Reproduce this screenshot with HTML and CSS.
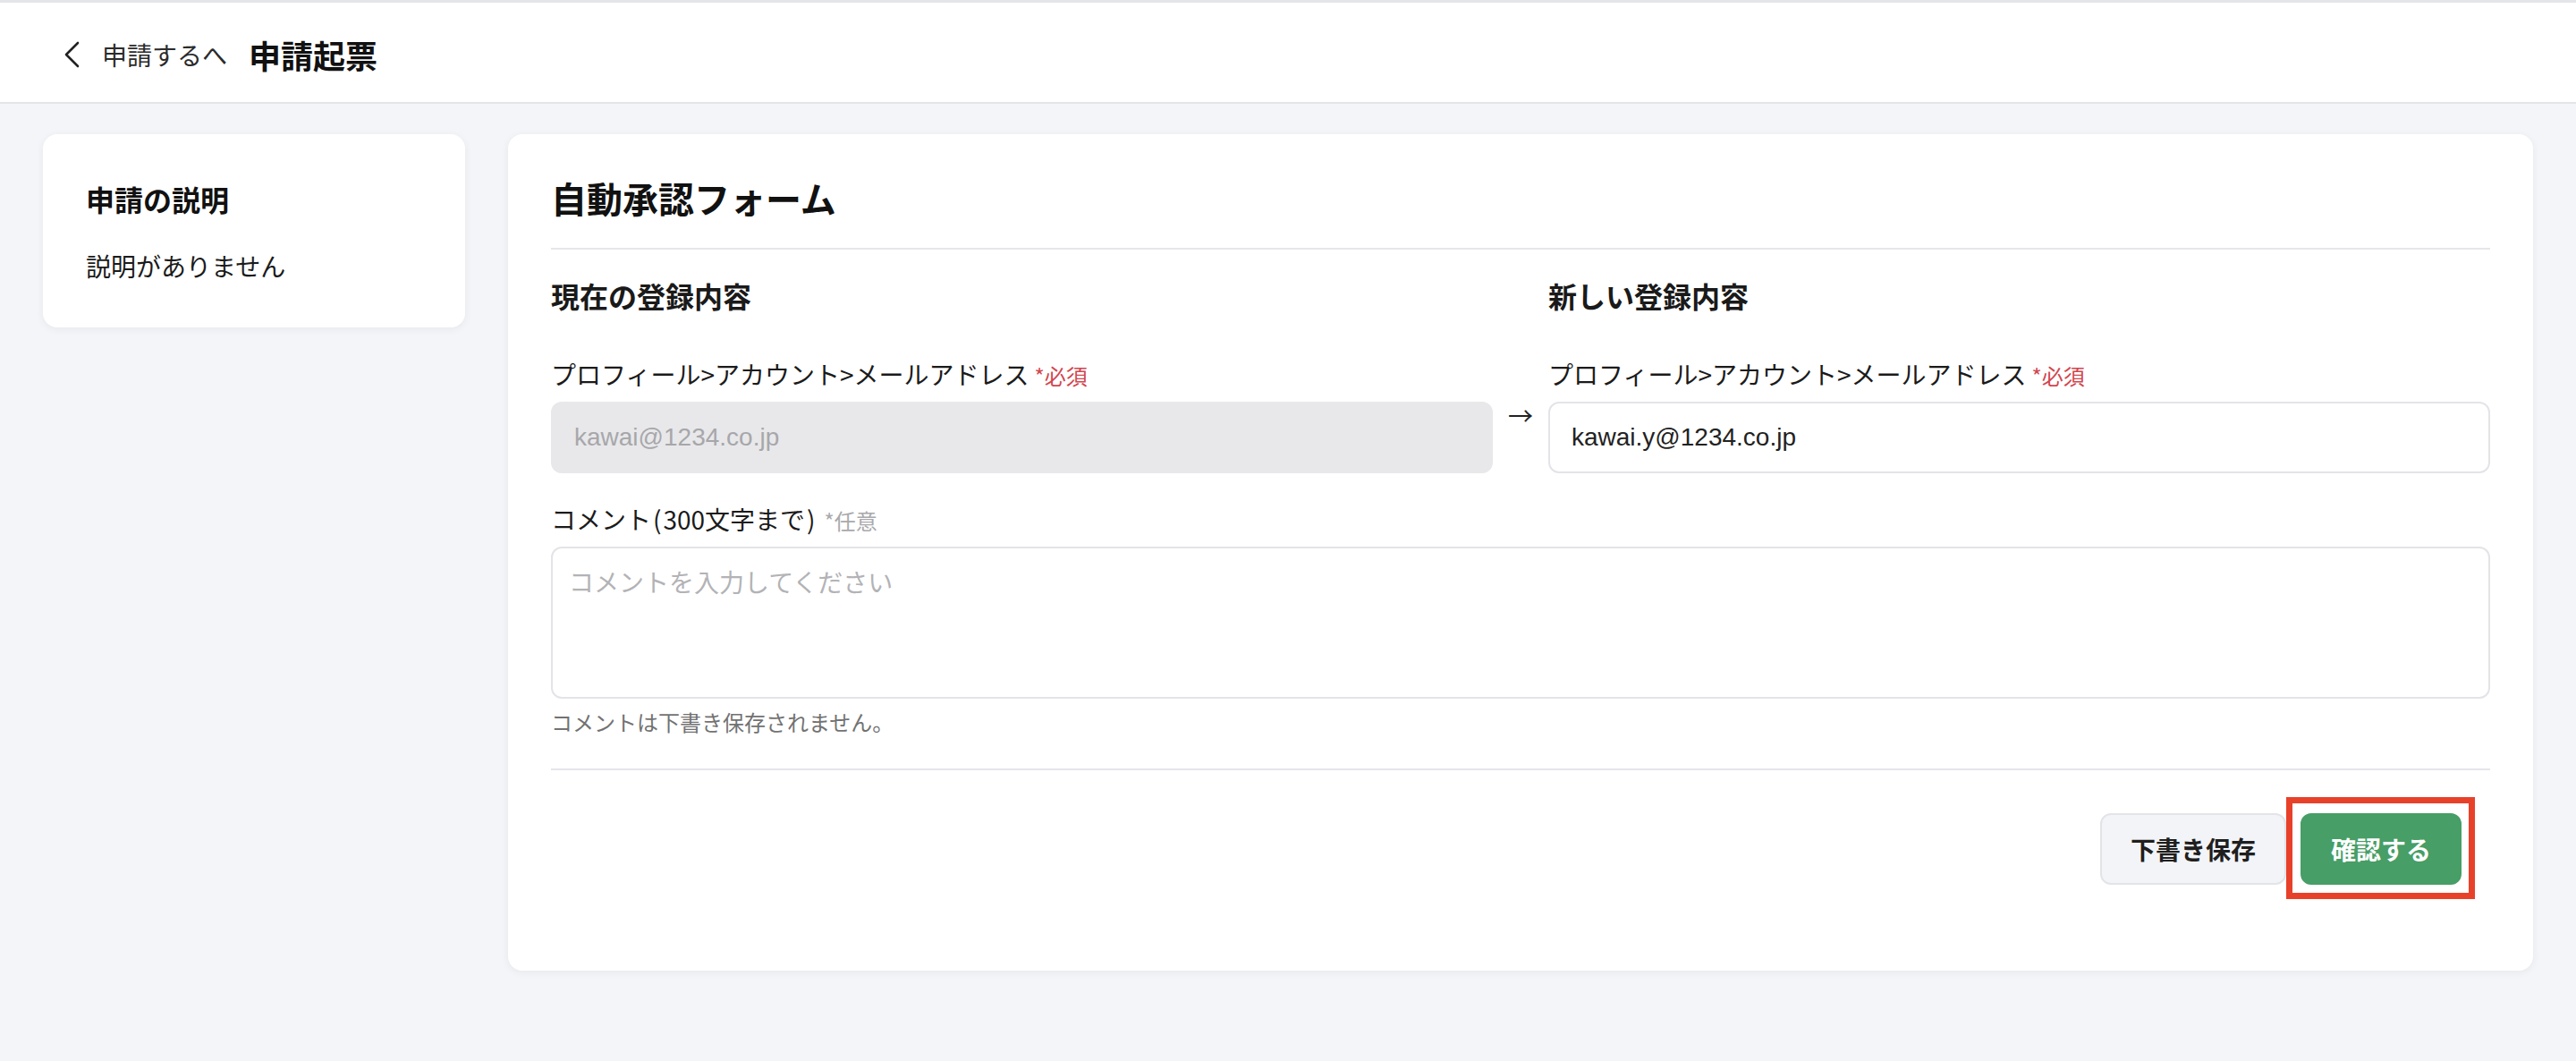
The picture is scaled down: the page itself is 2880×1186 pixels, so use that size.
FILE: index.html
```html
<!DOCTYPE html>
<html lang="ja">
  <head>
    <meta charset="utf-8" />
    <meta name="viewport" content="width=device-width, initial-scale=1" />
    <link rel="stylesheet" href="styles.css">
    <title>申請起票</title>
  </head>
  <body>
    <header class="topbar">
      <a class="back" href="#">
        <svg viewBox="0 0 32 32" fill="none" stroke="#222" stroke-width="2.6" stroke-linecap="round" stroke-linejoin="round">
          <path d="M23 3 L10 16 L23 29" />
        </svg>
        <span>申請するへ</span>
      </a>
      <h1>申請起票</h1>
    </header>

    <main class="layout">
      <aside class="card side">
        <h2>申請の説明</h2>
        <p>説明がありません</p>
      </aside>

      <section class="card main">
        <h2 class="form-title">自動承認フォーム</h2>
        <hr class="rule" />

        <div class="compare">
          <h3 class="col-left">現在の登録内容</h3>
          <h3 class="col-right">新しい登録内容</h3>

          <div class="label col-left">プロフィール&gt;アカウント&gt;メールアドレス<span class="req">*必須</span></div>
          <div class="label col-right">プロフィール&gt;アカウント&gt;メールアドレス<span class="req">*必須</span></div>

          <input class="field current col-left" type="text" value="kawai@1234.co.jp" disabled />
          <div class="arrow">→</div>
          <input class="field col-right" type="text" value="kawai.y@1234.co.jp" />
        </div>

        <div class="comment">
          <div class="label">コメント<span class="paren">(</span>300文字まで<span class="paren">)</span><span class="opt">*任意</span></div>
          <textarea class="note" placeholder="コメントを入力してください"></textarea>
          <div class="help">コメントは下書き保存されません。</div>
        </div>

        <hr class="rule rule-bottom" />

        <div class="actions">
          <button class="btn btn-draft" type="button">下書き保存</button>
          <span class="mark">
            <button class="btn btn-confirm" type="button">確認する</button>
          </span>
        </div>
      </section>
    </main>
  </body>
</html>
```

FILE: styles.css
```css
* {
  box-sizing: border-box;
}

html,
body {
  margin: 0;
}

body {
  min-height: 1186px;
  background-color: #f4f5f8;
  font-family: "Noto Sans CJK JP", "Noto Sans", sans-serif;
  color: #1b1b1b;
}

/* top bar */

.topbar {
  display: flex;
  align-items: center;
  height: 116px;
  padding: 4px 64px 0;
  background-color: #fff;
  border-top: 3px solid #e4e5e9;
  border-bottom: 2px solid #e4e5e9;
}

.back {
  display: flex;
  align-items: center;
  gap: 18px;
  font-size: 28px;
  line-height: 42px;
  color: #2b2b2b;
  text-decoration: none;
}

.back svg {
  width: 32px;
  height: 32px;
}

.topbar h1 {
  margin: 0 0 0 24px;
  font-size: 36px;
  line-height: 48px;
  font-weight: 700;
  color: #111;
}

/* cards */

.layout {
  display: flex;
  align-items: flex-start;
  gap: 48px;
  padding: 34px 48px;
}

.card {
  background-color: #fff;
  border-radius: 16px;
  box-shadow: 0 2px 10px rgba(30, 40, 70, 0.06);
  padding: 48px;
}

.side {
  flex: none;
  width: 472px;
}

.side h2 {
  margin: 0;
  font-size: 32px;
  line-height: 48px;
  font-weight: 700;
  color: #111;
}

.side p {
  margin: 30px 0 0;
  font-size: 28px;
  line-height: 42px;
}

.main {
  flex: 1;
  padding-bottom: 96px;
}

.form-title {
  margin: 0;
  font-size: 40px;
  line-height: 46px;
  font-weight: 700;
  color: #111;
}

.rule {
  border: 0;
  border-top: 2px solid #e5e6ea;
  margin: 33px 0 27px;
}

.rule-bottom {
  margin: 34px 0 48px;
}

/* current / new values */

.compare {
  display: grid;
  grid-template-columns: 1fr 62px 1fr;
}

.col-left {
  grid-column: 1;
}

.col-right {
  grid-column: 3;
}

.compare h3 {
  margin: 0 0 43px;
  font-size: 32px;
  line-height: 48px;
  font-weight: 700;
  color: #1a1a1a;
}

.label {
  margin-bottom: 8px;
  font-size: 28px;
  line-height: 42px;
  color: #1b1b1b;
}

.paren {
  padding: 0 2px;
}

.req {
  margin-left: 6px;
  font-size: 24px;
  color: #d2464f;
}

.opt {
  margin-left: 8px;
  font-size: 24px;
  color: #a9a9ab;
}

.field {
  width: 100%;
  height: 80px;
  padding: 0 24px;
  border: 2px solid #e3e4e8;
  border-radius: 12px;
  background-color: #fff;
  font-family: "Liberation Sans", "Noto Sans CJK JP", sans-serif;
  font-size: 28px;
  color: #222;
  outline: none;
}

.field.current {
  background-color: #e8e8ea;
  border-color: #e8e8ea;
  color: #a7a7aa;
}

.arrow {
  grid-column: 2;
  text-align: center;
  font-size: 28px;
  line-height: 30px;
  color: #222;
}

/* comment */

.comment {
  margin-top: 30px;
}

.note {
  display: block;
  width: 100%;
  height: 170px;
  padding: 16px 18px;
  border: 2px solid #e3e4e8;
  border-radius: 12px;
  font-family: "Noto Sans CJK JP", sans-serif;
  font-size: 28px;
  line-height: 42px;
  resize: none;
  outline: none;
}

.note::placeholder {
  color: #b3b3b6;
}

.help {
  margin-top: 8px;
  font-size: 24px;
  line-height: 36px;
  color: #727272;
}

/* buttons */

.actions {
  display: flex;
  justify-content: flex-end;
  gap: 16px;
  padding-right: 32px;
}

.btn {
  height: 80px;
  padding: 0 32px;
  border: 2px solid transparent;
  border-radius: 12px;
  font-family: "Noto Sans CJK JP", sans-serif;
  font-size: 28px;
  font-weight: 700;
  cursor: pointer;
}

.btn-draft {
  background-color: #f3f4f7;
  border-color: #e3e4e8;
  color: #1f1f1f;
}

.btn-confirm {
  background-color: #479e66;
  border-color: #479e66;
  color: #fff;
}

.mark {
  position: relative;
  display: flex;
}

.mark::after {
  content: "";
  position: absolute;
  top: -18px;
  left: -16px;
  right: -15px;
  bottom: -16px;
  border: 7px solid #e8412a;
  pointer-events: none;
}
```
